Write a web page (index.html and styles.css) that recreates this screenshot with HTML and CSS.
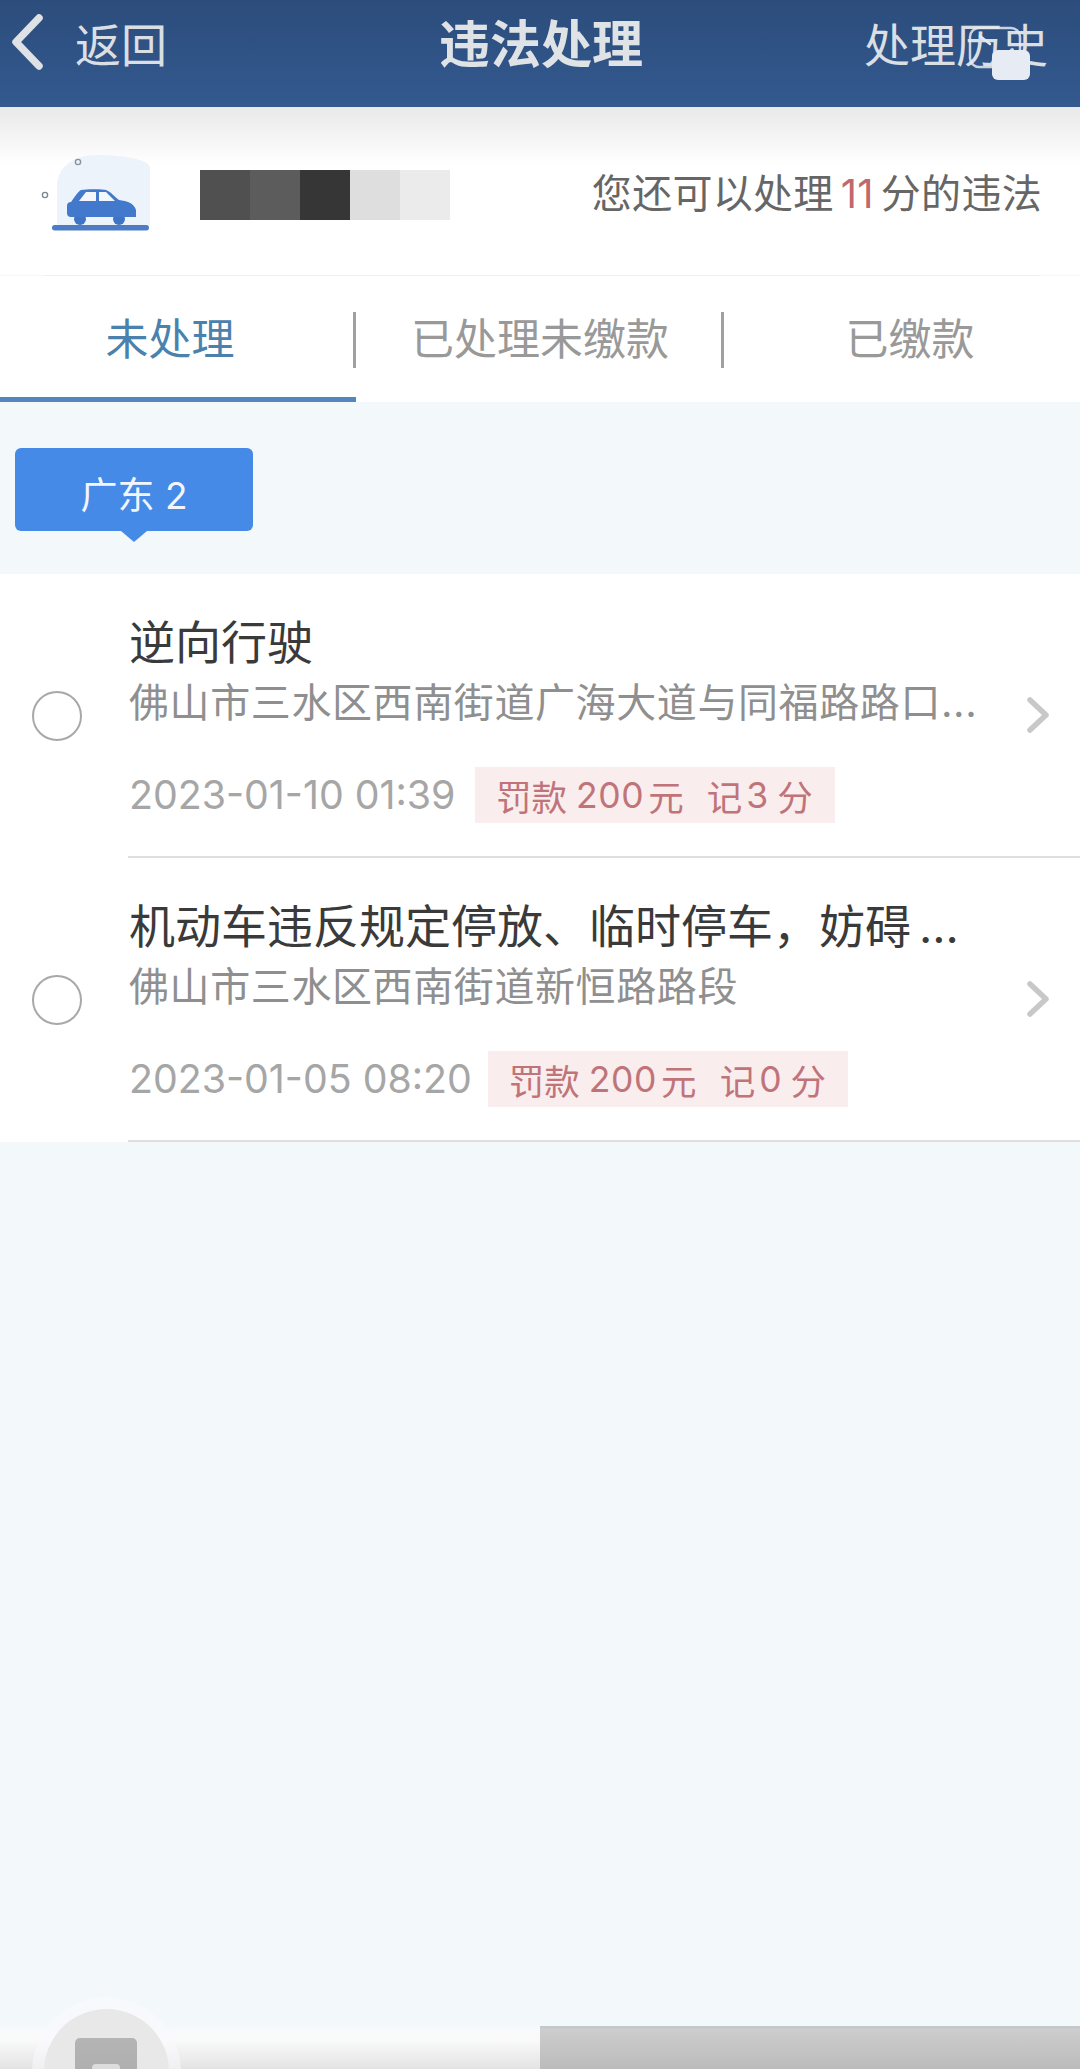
FILE: index.html
```html
<!DOCTYPE html>
<html lang="zh-CN">
<head>
<meta charset="utf-8">
<title>违法处理</title>
<link rel="stylesheet" href="styles.css">
</head>
<body>
<div class="page">
  <header class="topbar">
    <div class="back">
      <svg class="back-icon" width="34" height="56" viewBox="0 0 34 56"><path d="M29 4 6 28l23 24" fill="none" stroke="#dfe2e5" stroke-width="7.5" stroke-linecap="round" stroke-linejoin="round"/></svg>
      <span>返回</span>
    </div>
    <h1 class="title">违法处理</h1>
    <div class="history">处理历史</div>
    <svg class="float-icon" width="64" height="56" viewBox="0 0 64 56"><rect x="2" y="2" width="50" height="39" rx="9" fill="none" stroke="#e6eaf0" stroke-opacity=".85" stroke-width="2.5"/><path d="M12 10l10 8" stroke="#e6eaf0" stroke-width="2.5" stroke-linecap="round"/><rect x="24" y="24" width="38" height="30" rx="6" fill="#e7ebf3"/></svg>
  </header>

  <section class="info">
    <svg class="car" width="120" height="80" viewBox="0 0 120 80">
      <path d="M21 72V32C21 12 40 0 62 1c24 0 52 4 52 13v58z" fill="#ecf3fb"/>
      <circle cx="42" cy="8" r="2.6" fill="none" stroke="#8b9198" stroke-width="1.4"/>
      <circle cx="9" cy="41" r="2.6" fill="none" stroke="#7c8795" stroke-width="1.4"/>
      <rect x="16" y="71" width="97" height="5.5" rx="2.7" fill="#4d7cc4"/>
      <circle cx="44" cy="65" r="6" fill="#3f74c4"/>
      <circle cx="83" cy="65" r="6" fill="#3f74c4"/>
      <path d="M35 48c1-1 7-11 10-12 5-1 21-1 25 0 4 1 10 8 13 10 8 1 15 3 17 10v7H35a4 4 0 0 1-4-4V52a4 4 0 0 1 4-4z" fill="#4379cc"/>
      <path d="M43 47l7-9h10v9zM63 38h7l9 9H63z" fill="#f3f7fc"/>
    </svg>
    <div class="mask" aria-hidden="true">
      <i class="m1"></i><i class="m2"></i><i class="m3"></i><i class="m4"></i><i class="m5"></i>
    </div>
    <p class="quota">您还可以处理<b>11</b>分的违法</p>
  </section>
  <div class="rule"></div>

  <nav class="tabs">
    <div class="tab tab-first active">未处理</div>
    <div class="tab">已处理未缴款</div>
    <div class="tab tab-last">已缴款</div>
  </nav>

  <div class="region">
    <div class="pill">广东 2</div>
  </div>

  <ul class="list">
    <li class="row">
      <span class="radio"></span>
      <div class="body">
        <div class="content">
          <div class="name">逆向行驶</div>
          <div class="addr">佛山市三水区西南街道广海大道与同福路路口...</div>
          <div class="meta">
            <span class="date">2023-01-10 01:39</span>
            <span class="fine"><span>罚款</span><span class="amt">200</span><span class="unit">元</span><span class="pts">记</span><span>3</span><span>分</span></span>
          </div>
        </div>
        <svg class="arrow" width="24" height="38" viewBox="0 0 24 38"><path d="M4 4l16 15L4 34" fill="none" stroke="#c8c8c8" stroke-width="5.5" stroke-linecap="round" stroke-linejoin="round"/></svg>
      </div>
    </li>
    <li class="row">
      <span class="radio"></span>
      <div class="body">
        <div class="content">
          <div class="name">机动车违反规定停放、临时停车&#xFF0C;妨碍<span class="dots">...</span></div>
          <div class="addr">佛山市三水区西南街道新恒路路段</div>
          <div class="meta">
            <span class="date">2023-01-05 08:20</span>
            <span class="fine"><span>罚款</span><span class="amt">200</span><span class="unit">元</span><span class="pts">记</span><span>0</span><span>分</span></span>
          </div>
        </div>
        <svg class="arrow" width="24" height="38" viewBox="0 0 24 38"><path d="M4 4l16 15L4 34" fill="none" stroke="#c8c8c8" stroke-width="5.5" stroke-linecap="round" stroke-linejoin="round"/></svg>
      </div>
    </li>
  </ul>

  <footer class="dock">
    <div class="dock-left"></div>
    <div class="dock-right"></div>
    <div class="dock-fab"><span class="fab-card"><span class="fab-dot"></span></span></div>
  </footer>
</div>
</body>
</html>
```

FILE: styles.css
```css
* { box-sizing: border-box; }
html, body { margin: 0; padding: 0; }
body {
  font-family: Inter, "Noto Sans CJK SC", sans-serif;
  background: #f3f8fa;
  color: #333;
}
.page {
  position: relative;
  width: 1080px;
  height: 2069px;
  overflow: hidden;
  display: flex;
  flex-direction: column;
}

/* top bar */
.topbar {
  position: relative;
  flex: none;
  height: 107px;
  padding: 0 32px 18px 10px;
  display: grid;
  grid-template-columns: 1fr auto 1fr;
  align-items: center;
  color: #dadfe4;
  background: linear-gradient(#2c4d7c, #33598f);
}
.back { display: flex; align-items: center; gap: 31px; font-size: 46px; line-height: 56px; }
.back-icon { flex: none; margin-top: -5px; }
.title { margin: 0 -24px 0 0; font-size: 51px; line-height: 60px; font-weight: 700; color: #dfe3e6; }
.history { justify-self: end; font-size: 46px; line-height: 56px; }
.float-icon { position: absolute; left: 968px; top: 26px; }

/* plate + quota */
.info {
  flex: none;
  height: 168px;
  padding: 48px 38px 43px 36px;
  display: flex;
  align-items: center;
  gap: 44px;
  background: linear-gradient(#e9e9e9, #fff 58px);
}
.car { flex: none; }
.mask { display: flex; margin-top: 2px; }
.mask i { display: block; width: 50px; height: 50px; }
.m1 { background: #505050; }
.m2 { background: #5c5c5c; }
.m3 { background: #363636; }
.m4 { background: #dedede; }
.m5 { background: #ebebeb; }
.quota { margin: 0 0 0 auto; font-size: 40px; letter-spacing: .3px; line-height: 50px; color: #666; white-space: nowrap; }
.quota b { font-weight: 400; color: #c0686c; margin: 0 7px; }
.rule { flex: none; height: 1px; background: #efefef; margin: 0 40px 0 44px; box-shadow: 1080px 0 0 #fff; }

/* tabs */
.tabs { flex: none; display: flex; height: 126px; background: #fff; }
.tab {
  position: relative;
  width: 368px;
  padding-bottom: 2px;
  border-bottom: 5px solid transparent;
  display: flex;
  align-items: center;
  justify-content: center;
  font-size: 43px;
  color: #999;
}
.tab::after {
  content: "";
  position: absolute;
  right: 0;
  top: 36px;
  width: 3px;
  height: 56px;
  background: #a0a0a0;
}
.tab-first { width: 356px; padding-right: 16px; }
.tab-last { width: 356px; padding-left: 16px; }
.tab-last::after { display: none; }
.tab.active { color: #4a82ad; border-bottom-color: #5585bd; }

/* province pill */
.region { flex: none; height: 172px; padding: 46px 0 0 15px; }
.pill {
  position: relative;
  width: 238px;
  height: 83px;
  padding-top: 6px;
  display: flex;
  align-items: center;
  justify-content: center;
  border-radius: 6px;
  background: #468ae8;
  color: #f2f6fc;
  font-size: 37px;
}
.pill::after {
  content: "";
  position: absolute;
  left: 106px;
  bottom: -11px;
  width: 0;
  height: 0;
  border-left: 13px solid transparent;
  border-right: 13px solid transparent;
  border-top: 11px solid #468ae8;
}

/* list */
.list { flex: none; margin: 0; padding: 0; list-style: none; background: #fff; }
.row { display: flex; align-items: center; height: 284px; }
.radio {
  flex: none;
  width: 50px;
  height: 50px;
  margin: 0 46px 0 32px;
  border: 2.5px solid #a8a8a8;
  border-radius: 50%;
}
.body {
  flex: 1;
  min-width: 0;
  height: 284px;
  padding-right: 30px;
  display: flex;
  align-items: center;
  justify-content: space-between;
  border-bottom: 2px solid #dfdfdf;
}
.content { padding: 40px 0 0 1px; height: 282px; }
.name { font-size: 46px; line-height: 56px; color: #3a3a3a; white-space: nowrap; }
.dots { margin-left: 8px; }
.addr { font-size: 40px; letter-spacing: .6px; line-height: 66px; color: #8f8f8f; white-space: nowrap; }
.meta { display: flex; align-items: center; gap: 16px; margin-top: 31px; }
.date { min-width: 330px; font-size: 39.3px; line-height: 56px; color: #a6a6a6; white-space: nowrap; }
.fine {
  width: 360px;
  height: 56px;
  padding-left: 21px;
  display: flex;
  align-items: center;
  gap: 9px;
  background: #f9eded;
  color: #c0747a;
  font-size: 35.5px;
  white-space: nowrap;
}
.fine .amt { letter-spacing: .6px; }
.fine .unit { margin-left: -5px; }
.fine .pts { margin: 0 -5px 0 14px; }
.arrow { flex: none; }

/* bottom dock */
.dock {
  position: relative;
  margin-top: auto;
  flex: none;
  height: 43px;
  display: grid;
  grid-template-columns: 540px 540px;
}
.dock-left { background: linear-gradient(#f6f9fb, #fafafa 14px, #e3e3e3); }
.dock-right { background: linear-gradient(#c4c8cb, #c4c8cb 2px, #cdcdcd 3px, #bbb); }
.dock-fab {
  position: absolute;
  left: 44px;
  top: -17px;
  width: 125px;
  height: 125px;
  border-radius: 50%;
  background: #e8e8e8;
  box-shadow: 0 0 0 12px rgba(250, 250, 255, .55);
  padding: 29px 0 0 31px;
}
.fab-card {
  display: block;
  width: 62px;
  height: 80px;
  padding: 26px 0 0 17px;
  border-radius: 5px;
  background: linear-gradient(#b4b4b4, #a9a9a9);
}
.fab-dot { display: block; width: 28px; height: 20px; border-radius: 4px; background: #dcdcdc; }
```
